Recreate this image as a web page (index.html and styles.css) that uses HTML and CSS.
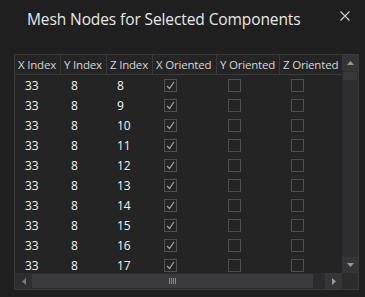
FILE: index.html
```html
<!DOCTYPE html>
<html lang="en">
<head>
  <meta charset="UTF-8">
  <title>Mesh Nodes for Selected Components</title>
  <link rel="stylesheet" href="styles.css">
</head>
<body>
  <div class="dialog">
    <div class="title-bar">
      <span class="title">Mesh Nodes for Selected Components</span>
      <span class="close-button">
        <svg width="10" height="10" viewBox="0 0 10 10"><path d="M0.5 0.5 L9.5 9.5 M9.5 0.5 L0.5 9.5" stroke="#d0d0d0" stroke-width="1.1" fill="none"/></svg>
      </span>
    </div>

    <div class="grid-frame">
      <div class="grid-body">
        <div class="grid-row grid-header">
          <div class="cell c1">X Index</div>
          <div class="cell c2">Y Index</div>
          <div class="cell c3">Z Index</div>
          <div class="cell c4">X Oriented</div>
          <div class="cell c5">Y Oriented</div>
          <div class="cell c6">Z Oriented</div>
        </div>
        <div id="rows"></div>
      </div>

      <!-- Vertical scrollbar -->
      <div class="vscroll">
        <div class="scroll-btn vbtn">
          <svg width="7" height="4" viewBox="0 0 7 4"><path d="M0 4 L3.5 0 L7 4 Z" fill="#9a9a9a"/></svg>
        </div>
        <div class="vthumb"></div>
        <div class="vtrack"></div>
        <div class="scroll-btn vbtn">
          <svg width="7" height="4" viewBox="0 0 7 4"><path d="M0 0 L3.5 4 L7 0 Z" fill="#9a9a9a"/></svg>
        </div>
      </div>

      <!-- Horizontal scrollbar -->
      <div class="hscroll">
        <div class="scroll-btn hbtn">
          <svg width="4" height="7" viewBox="0 0 4 7"><path d="M4 0 L0 3.5 L4 7 Z" fill="#7a7a7a"/></svg>
        </div>
        <div class="hthumb">
          <span class="grip"><i></i><i></i><i></i><i></i></span>
        </div>
        <div class="htrack"></div>
        <div class="scroll-btn hbtn">
          <svg width="4" height="7" viewBox="0 0 4 7"><path d="M0 0 L4 3.5 L0 7 Z" fill="#9a9a9a"/></svg>
        </div>
      </div>
      <div class="corner"></div>
    </div>
  </div>

  <script>
    // Node rows: x and y stay fixed, z walks along
    const rows = document.getElementById("rows");
    const check = '<svg width="11" height="11" viewBox="0 0 11 11"><path d="M2 6 L4.5 8.5 L9 2" stroke="#a0a0a0" stroke-width="1.3" fill="none"/></svg>';

    for (let z = 8; z <= 17; z++) {
      const row = document.createElement("div");
      row.className = "grid-row";
      row.innerHTML =
        '<div class="cell c1">33</div>' +
        '<div class="cell c2">8</div>' +
        '<div class="cell c3">' + z + '</div>' +
        '<div class="cell c4"><span class="checkbox">' + check + '</span></div>' +
        '<div class="cell c5"><span class="checkbox"></span></div>' +
        '<div class="cell c6"><span class="checkbox"></span></div>';
      rows.appendChild(row);
    }
  </script>
</body>
</html>
```

FILE: styles.css
```css
body {
  margin: 0;
  background: #1f1f1f;
  font-family: 'Open Sans', 'Noto Sans', sans-serif;
  color: #f4f4f4;
}

.dialog {
  width: 365px;
  height: 297px;
  overflow: hidden;
}

/* Title bar */
.title-bar {
  display: flex;
  align-items: center;
  justify-content: space-between;
  height: 38px;
  padding: 0 15px 0 27px;
}

.title {
  font-size: 15.5px;
  color: #e8e8e8;
  letter-spacing: -0.1px;
}

.close-button {
  display: flex;
  margin-top: -6px;
}

/* Grid */
.grid-frame {
  display: grid;
  grid-template-columns: 327px 16px;
  grid-template-rows: 218px 16px;
  margin: 16px 0 0 14px;
  width: 343px;
  border: 1px solid #3a3a3a;
  background: #242424;
}

.grid-body {
  overflow: hidden;
}

.grid-row {
  display: flex;
  height: 20px;
}

.grid-header {
  border-bottom: 1px solid #3a3a3a;
  height: 19px;
}

.cell {
  box-sizing: border-box;
  display: flex;
  align-items: center;
  padding-left: 10px;
  font-size: 12px;
  white-space: nowrap;
  overflow: hidden;
}

.c1, .c2, .c3 { width: 46px; }
.c4 { width: 64px; }
.c5 { width: 63px; }
.c6 { width: 62px; }

.grid-header .cell {
  padding-left: 3px;
  border-right: 1px solid #3a3a3a;
  color: #d6d6d6;
  font-size: 11.5px;
  letter-spacing: -0.2px;
}

.grid-header .c6 {
  border-right: none;
}

.c4, .c5, .c6 {
  padding-left: 11px;
}

.checkbox {
  box-sizing: border-box;
  display: flex;
  align-items: center;
  justify-content: center;
  width: 13px;
  height: 13px;
  border: 1px solid #505050;
}

/* Scrollbars */
.vscroll {
  display: flex;
  flex-direction: column;
  background: #2e2e30;
}

.scroll-btn {
  display: flex;
  align-items: center;
  justify-content: center;
  background: #353538;
}

.vbtn {
  height: 16px;
}

.vthumb {
  height: 8px;
  margin: 1px 1px 0;
  background: #38383b;
}

.vtrack {
  flex: 1;
}

.hscroll {
  display: flex;
  background: #2b2b2d;
}

.hbtn {
  width: 17px;
}

.hbtn:first-child {
  background: #2e2e30;
}

.hthumb {
  display: flex;
  align-items: center;
  justify-content: center;
  width: 281px;
  margin: 1px 0;
  background: #3b3b3f;
}

.grip {
  display: flex;
  gap: 1px;
}

.grip i {
  width: 1px;
  height: 6px;
  background: #8c8c8c;
}

.htrack {
  flex: 1;
}

.corner {
  background: #2b2b2b;
}
```
